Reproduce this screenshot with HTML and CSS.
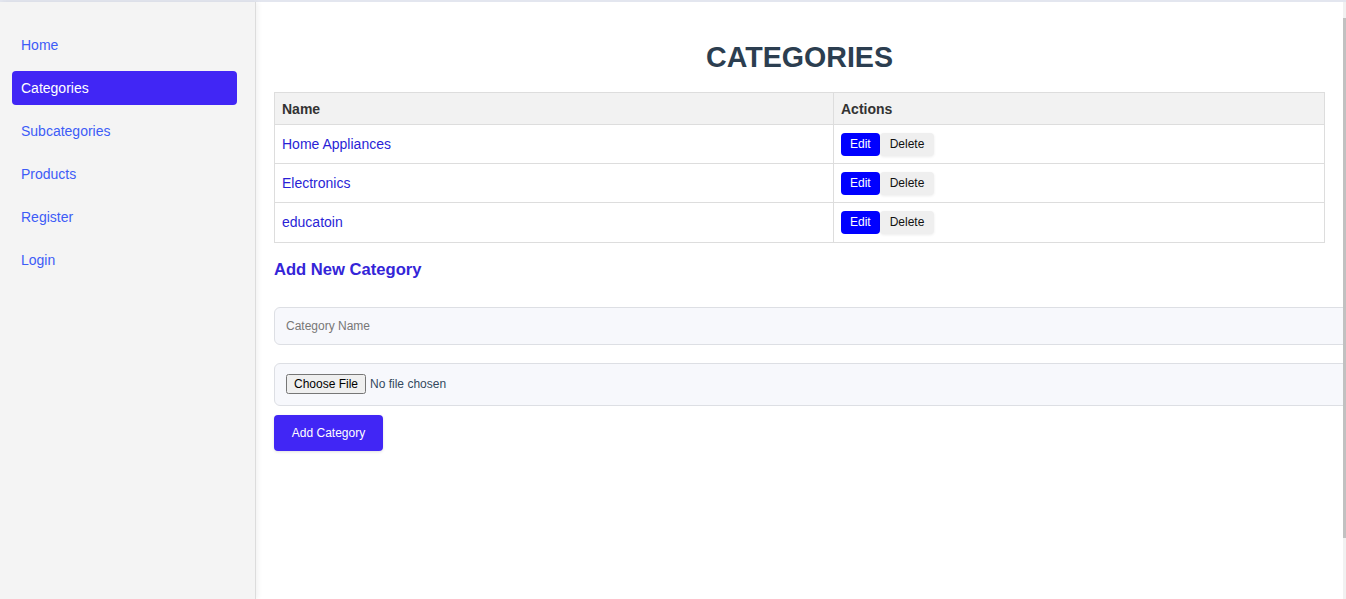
FILE: index.html
```html
<!DOCTYPE html>
<html>
<head>
<meta charset="utf-8">
<link rel="stylesheet" href="styles.css">
</head>
<body>
<div class="app">
  <aside class="sidebar">
    <nav class="nav">
      <a class="nav-item">Home</a>
      <a class="nav-item active">Categories</a>
      <a class="nav-item">Subcategories</a>
      <a class="nav-item">Products</a>
      <a class="nav-item">Register</a>
      <a class="nav-item">Login</a>
    </nav>
  </aside>
  <main class="main">
    <h1 class="title">CATEGORIES</h1>
    <table class="table">
      <thead>
        <tr><th class="col-name">Name</th><th>Actions</th></tr>
      </thead>
      <tbody>
        <tr><td><a class="cat-link">Home Appliances</a></td><td><div class="actions"><button class="btn-edit">Edit</button><button class="btn-delete">Delete</button></div></td></tr>
        <tr><td><a class="cat-link">Electronics</a></td><td><div class="actions"><button class="btn-edit">Edit</button><button class="btn-delete">Delete</button></div></td></tr>
        <tr><td><a class="cat-link">educatoin</a></td><td><div class="actions"><button class="btn-edit">Edit</button><button class="btn-delete">Delete</button></div></td></tr>
      </tbody>
    </table>
    <h3 class="subtitle">Add New Category</h3>
    <form class="form">
      <input class="field" type="text" placeholder="Category Name">
      <div class="field file-field"><input type="file"></div>
      <button type="button" class="btn-add">Add Category</button>
    </form>
    <div class="scrollbar"><div class="thumb"></div></div>
  </main>
</div>
</body>
</html>
```
FILE: styles.css
```css
html, body {
  margin: 0;
  padding: 0;
  height: 100%;
}
body {
  font-family: "Liberation Sans", Arial, sans-serif;
  background: #fff;
  overflow: hidden;
}
.app {
  display: flex;
  height: 599px;
  border-top: 2px solid #e3e6ef;
  box-sizing: border-box;
}
.sidebar {
  width: 256px;
  flex: none;
  background: #f4f4f4;
  border-right: 1px solid #dcdcdc;
  box-shadow: 2px 0 5px rgba(0,0,0,0.06);
  box-sizing: border-box;
  padding: 26px 18px 0 12px;
  position: relative;
  z-index: 1;
}
.nav {
  display: flex;
  flex-direction: column;
  gap: 9px;
}
.nav-item {
  display: flex;
  align-items: center;
  height: 34px;
  padding-left: 9px;
  border-radius: 4px;
  font-size: 14px;
  color: #3d5cf7;
  cursor: pointer;
}
.nav-item.active {
  background: #4126f5;
  color: #fff;
}
.main {
  flex: 1;
  position: relative;
  overflow: hidden;
  padding: 0 21px 0 18px;
  box-sizing: border-box;
}
.title {
  margin: 39px 0 0;
  height: 51px;
  text-align: center;
  font-size: 28.6px;
  font-weight: bold;
  color: #2c3e50;
  line-height: 32px;
}
.table {
  width: 100%;
  border-collapse: collapse;
  font-size: 14px;
}
.table th, .table td {
  border: 1px solid #dddddd;
  padding: 0 7px;
  text-align: left;
}
.table th {
  background: #f2f2f2;
  color: #333;
  font-weight: bold;
  height: 31px;
}
.col-name {
  width: 544px;
}
.table td {
  height: 38.2px;
}
.cat-link {
  color: #2a1fd6;
}
.actions {
  display: flex;
}
.btn-edit, .btn-delete {
  font-family: "Liberation Sans", Arial, sans-serif;
  font-size: 12px;
  height: 23px;
  padding: 0 9px;
  border: none;
  border-radius: 4px;
  cursor: pointer;
}
.btn-edit {
  background: #0000ff;
  color: #fff;
}
.btn-delete {
  background: #efefef;
  color: #111;
  padding: 0 10px;
  box-shadow: 0 1px 3px rgba(0,0,0,0.08);
}
.subtitle {
  margin: 18px 0 0;
  font-size: 16.6px;
  line-height: 18px;
  font-weight: bold;
  color: #3425d8;
}
.form {
  display: flex;
  flex-direction: column;
  align-items: flex-start;
  margin-top: 28px;
}
.field {
  width: calc(100% + 40px);
  box-sizing: border-box;
  background: #f7f8fc;
  border: 1px solid #dddfe4;
  border-radius: 6px;
  font-family: "Liberation Sans", Arial, sans-serif;
  font-size: 12px;
  padding: 0 11px;
  color: #333;
}
input.field {
  height: 38px;
  outline: none;
}
.field::placeholder {
  color: #777;
}
.file-field {
  margin-top: 18px;
  height: 43px;
  display: flex;
  align-items: center;
}
.file-field input {
  font-family: "Liberation Sans", Arial, sans-serif;
  font-size: 12px;
  color: #34495e;
}
.btn-add {
  margin-top: 9px;
  width: 109px;
  height: 36px;
  border: none;
  border-radius: 4px;
  background: #4126f5;
  color: #fff;
  font-family: "Liberation Sans", Arial, sans-serif;
  font-size: 12px;
  box-shadow: 0 1px 3px rgba(0,0,0,0.12);
  cursor: pointer;
}
.scrollbar {
  position: absolute;
  top: 0;
  right: 0;
  width: 3px;
  height: 100%;
  background: #f1f1f1;
}
.thumb {
  margin-top: 16px;
  height: 520px;
  background: #c1c1c1;
}
```
